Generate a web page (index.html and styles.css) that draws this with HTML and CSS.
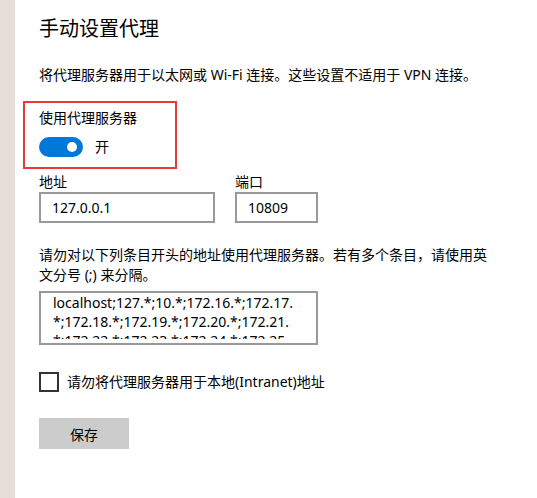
FILE: index.html
```html
<!DOCTYPE html>
<html lang="zh-CN">
<head>
    <meta charset="UTF-8">
    <meta name="viewport" content="width=device-width, initial-scale=1.0">
    <title>代理</title>
    <link rel="stylesheet" href="styles.css">
</head>
<body>
    <div class="page">
        <div class="strip"></div>
        <div class="panel">
            <h1 class="title">手动设置代理</h1>
            <p class="desc">将代理服务器用于以太网或 Wi-Fi 连接。这些设置不适用于 VPN 连接。</p>

            <div class="proxy-box">
                <div class="label">使用代理服务器</div>
                <div class="toggle-row">
                    <span class="toggle"><span class="knob"></span></span>
                    <span class="toggle-text">开</span>
                </div>
            </div>

            <div class="fields">
                <div class="field">
                    <div class="label">地址</div>
                    <div class="input addr">127.0.0.1</div>
                </div>
                <div class="field">
                    <div class="label">端口</div>
                    <div class="input port">10809</div>
                </div>
            </div>

            <p class="hint">请勿对以下列条目开头的地址使用代理服务器。若有多个条目，请使用英文分号 (;) 来分隔。</p>
            <div class="textarea">
                <div class="textarea-inner">localhost;127.*;10.*;172.16.*;172.17.<br>*;172.18.*;172.19.*;172.20.*;172.21.<br>*;172.22.*;172.23.*;172.24.*;172.25.</div>
            </div>

            <div class="check-row">
                <span class="checkbox"></span>
                <span class="check-text">请勿将代理服务器用于本地(Intranet)地址</span>
            </div>

            <button class="save">保存</button>
        </div>
    </div>
</body>
</html>
```

FILE: styles.css
```css
* {
    margin: 0;
    padding: 0;
    box-sizing: border-box;
}

body {
    font-family: "Noto Sans", "Noto Sans CJK SC", sans-serif;
    font-size: 14px;
    line-height: 20px;
    color: #000;
    background: #fff;
}

.page {
    display: flex;
    height: 498px;
}

.strip {
    width: 15px;
    flex-shrink: 0;
    background: #e6dfd7;
}

.panel {
    flex: 1;
    padding: 15px 0 0 24px;
}

.title {
    font-size: 20px;
    font-weight: normal;
    line-height: 28px;
}

.desc {
    margin-top: 22px;
}

.proxy-box {
    margin-top: 16px;
    margin-left: -16px;
    width: 154px;
    height: 68px;
    border: 2px solid #e83a3a;
    padding: 5px 0 0 14px;
}

.toggle-row {
    display: flex;
    align-items: center;
    margin-top: 9px;
}

.toggle {
    position: relative;
    width: 44px;
    height: 20px;
    border-radius: 10px;
    background: #0078d7;
}

.knob {
    position: absolute;
    left: 28px;
    top: 5px;
    width: 10px;
    height: 10px;
    border-radius: 50%;
    background: #fff;
}

.toggle-text {
    margin-left: 12px;
}

.fields {
    display: flex;
    gap: 20px;
    margin-top: 3px;
}

.input {
    height: 31px;
    border: 2px solid #999;
    padding: 4px 0 0 11px;
}

.addr {
    width: 176px;
}

.port {
    width: 83px;
}

.hint {
    margin-top: 22px;
    width: 460px;
}

.textarea {
    margin-top: 6px;
    width: 279px;
    height: 54px;
    border: 2px solid #999;
    padding: 0 0 0 12px;
}

.textarea-inner {
    height: 46px;
    line-height: 19px;
    overflow: hidden;
    white-space: nowrap;
}

.check-row {
    display: flex;
    align-items: center;
    margin-top: 27px;
}

.checkbox {
    width: 20px;
    height: 20px;
    border: 2px solid #333;
}

.check-text {
    margin-left: 8px;
}

.save {
    display: block;
    margin-top: 26px;
    width: 90px;
    height: 31px;
    border: none;
    background: #ccc;
    font-family: inherit;
    font-size: 14px;
    color: #000;
}
```
